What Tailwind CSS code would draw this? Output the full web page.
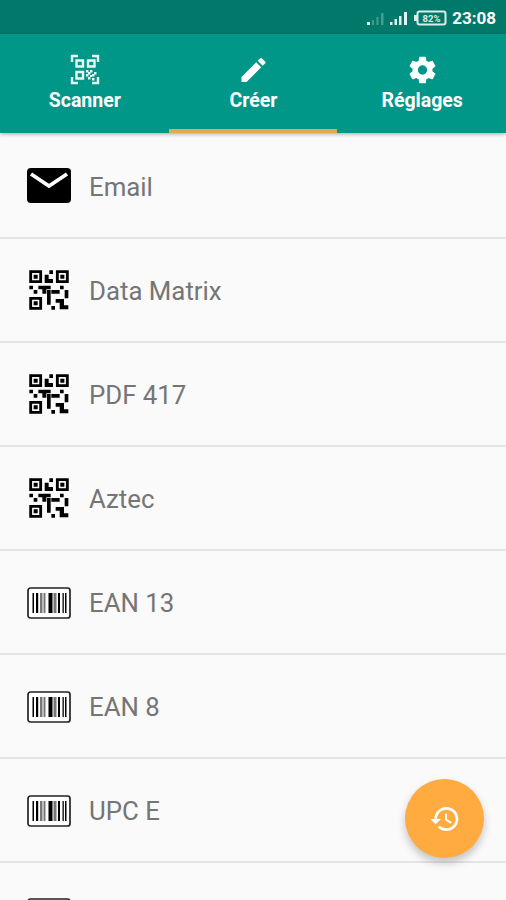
<!DOCTYPE html>
<html lang="fr"><head><meta charset="utf-8"><title>Créer</title><script src="https://cdn.jsdelivr.net/npm/@tailwindcss/browser@4"></script></head>
<body class="w-[506px] h-[900px] overflow-hidden bg-[#fafafa] font-[Roboto,sans-serif]">
<svg class="hidden">
<symbol id="qr" viewBox="0 0 120 120"><path fill="none" stroke="#000" stroke-width="8.500" d="M5 5H35V35H5ZM85 5H115V35H85ZM5 85H35V115H5Z"/><path d="M14 14h12v12H14zM94 14h12v12H94zM14 94h12v12H14zM61 1h11v11H61zM47 14h12v13h13v12H47zM1 47h11v11H1zM14 60h11v11H14zM28 47h37v11H52v13H40V58H28zM54 60h11v44H54zM67 60h25v11H67zM93 47h11v11H93zM107 60h11v25h-11zM80 87h25v19h13v12H92V98H80zM67 108h11v11H67z"/></symbol>
<symbol id="bar" viewBox="0 0 44 32"><rect x="1" y="1" width="42" height="30" rx="2.500" fill="#fff" stroke="#222" stroke-width="1.700"/><path d="M5.500 6H7v20H5.500zM9 6h2.200v20H9zM21.500 6h4v20h-4zM31 6h2v20h-2zM35.500 6h1.300v20h-1.300zM38 6h1.500v20H38z"/><path fill="#777" d="M13 6h2.500v20H13zM16.500 6h2v20h-2zM26.500 6h3v20h-3z"/></symbol>
</svg>
<div class="flex h-[900px] flex-col overflow-hidden">
<div class="flex h-[34px] shrink-0 items-center justify-end bg-[#00796b] pt-[1px] pr-[10px] text-white">
<svg class="mr-[4px] h-[16px] w-[44px]" viewBox="0 0 44 16"><g fill="#e4f3f0"><path d="M1 12h3v3H1zM24 12h2.500v3H24zM28.500 9H31v6h-2.500zM33 6h2.500v9H33zM38 2h3v13h-3z"/><path opacity=".3" d="M6 10h2v5H6zM10.500 7h2v8h-2zM15 3h2.500v12H15z"/></g></svg>
<svg class="mr-[5px] h-[16px] w-[33px]" viewBox="0 0 33 16"><rect x="3.500" y="1.500" width="28" height="13" rx="2" fill="none" stroke="#d9eeea" stroke-width="2"/><path fill="#d9eeea" d="M0 5h3v6H0z"/><text x="17.500" y="11.500" text-anchor="middle" font-family="Roboto" font-size="9.500" font-weight="700" fill="#d9eeea">82%</text></svg>
<span class="pt-[1px] text-[17px] font-bold leading-none">23:08</span></div>
<div class="relative z-10 grid h-[99px] shrink-0 grid-cols-3 bg-[#009688] text-[19.500px] font-bold leading-6 text-white shadow-[0_1px_4px_rgba(0,0,0,0.35)]">
<div class="flex flex-col items-center pt-[20px] pl-[1px]"><svg class="h-[31px] w-[30px]" viewBox="0 0 30 31"><g fill="none" stroke="#e9f7f5" stroke-width="2.400"><path d="M2 8V2h6M22 2h6v6M2 23v6h6M22 29h6v-6"/><path d="M6.500 6.500h6.500v6H6.500zM18 6.500h6.500v6H18zM6.500 18h6.500v6.500H6.500z"/></g><path fill="#e9f7f5" d="M16 16h2.500v2.500H16zM20 16h2.500v2.500H20zM24 18h2.500v2.500H24zM18 18h2.500v2.500H18zM22 20h2.500v2.500H22zM16 20h2.500v2.500H16zM20 21h2v2h-2zM18 23h2.500v2.500H18zM22 24h2.500v2.500H22z"/></svg><span class="pt-[4px]">Scanner</span></div>
<div class="flex flex-col items-center border-b-4 border-[#e5a94a] pt-[20px] pl-[1px]"><svg class="h-[32px] w-[35px]" viewBox="0 0 24 24" fill="#fff"><path d="M3 17.250V21h3.750L17.810 9.940l-3.750-3.750L3 17.250zM20.710 7.040a1 1 0 0 0 0-1.410l-2.340-2.340a1 1 0 0 0-1.410 0l-1.830 1.830 3.750 3.750 1.830-1.830z"/></svg><span class="pt-[3px]">Créer</span></div>
<div class="flex flex-col items-center pt-[20px] pl-[1px]"><svg class="h-[32px] w-[33px]" viewBox="0 0 24 24" fill="#fff"><path d="M19.430 12.980c.04-.32.07-.64.07-.98s-.03-.66-.07-.98l2.110-1.650c.19-.15.24-.42.12-.64l-2-3.460c-.12-.22-.39-.3-.61-.22l-2.490 1c-.52-.4-1.080-.73-1.690-.98l-.38-2.650A.488.488 0 0 0 14 2h-4c-.25 0-.46.18-.49.42l-.38 2.650c-.61.25-1.170.59-1.690.98l-2.490-1c-.23-.09-.49 0-.61.22l-2 3.460c-.13.22-.07.49.12.64l2.110 1.650c-.04.32-.07.65-.07.98s.03.66.07.98l-2.110 1.650c-.19.15-.24.42-.12.64l2 3.460c.12.22.39.3.61.22l2.490-1c.52.4 1.080.73 1.690.98l.38 2.650c.03.24.24.42.49.42h4c.25 0 .46-.18.49-.42l.38-2.650c.61-.25 1.170-.59 1.690-.98l2.490 1c.23.09.49 0 .61-.22l2-3.460c.12-.22.07-.49-.12-.64l-2.110-1.650zM12 15.500a3.500 3.500 0 1 1 0-7 3.500 3.500 0 0 1 0 7z"/></svg><span class="pt-[3px]">Réglages</span></div>
</div>
<main class="text-[25.800px] text-[#757575]">
<div class="flex h-[106px] items-center border-b-2 border-[#e4e4e4] pt-[1px] pl-[27px]"><svg class="mr-[18px] h-[35px] w-[44px]" viewBox="0 0 44 35"><rect width="44" height="35" rx="4"/><path d="M4 6L22 18 40 6" fill="none" stroke="#fff" stroke-width="3.800"/></svg><span class="pt-[3px]">Email</span></div>
<div class="flex h-[104px] items-center border-b-2 border-[#e4e4e4] pl-[29px]"><svg class="mr-[20px] size-[40px]"><use href="#qr"/></svg><span class="pt-[2px]">Data Matrix</span></div>
<div class="flex h-[104px] items-center border-b-2 border-[#e4e4e4] pl-[29px]"><svg class="mr-[20px] size-[40px]"><use href="#qr"/></svg><span class="pt-[2px]">PDF 417</span></div>
<div class="flex h-[104px] items-center border-b-2 border-[#e4e4e4] pl-[29px]"><svg class="mr-[20px] size-[40px]"><use href="#qr"/></svg><span class="pt-[2px]">Aztec</span></div>
<div class="flex h-[104px] items-center border-b-2 border-[#e4e4e4] pl-[27px]"><svg class="mt-[2px] mr-[18px] h-[32px] w-[44px]"><use href="#bar"/></svg><span class="pt-[2px]">EAN 13</span></div>
<div class="flex h-[104px] items-center border-b-2 border-[#e4e4e4] pl-[27px]"><svg class="mt-[2px] mr-[18px] h-[32px] w-[44px]"><use href="#bar"/></svg><span class="pt-[2px]">EAN 8</span></div>
<div class="flex h-[104px] items-center border-b-2 border-[#e4e4e4] pl-[27px]"><svg class="mt-[2px] mr-[18px] h-[32px] w-[44px]"><use href="#bar"/></svg><span class="pt-[2px]">UPC E</span></div>
<div class="flex h-[37px] items-start overflow-hidden pt-[35px] pl-[27px]"><svg class="h-[32px] w-[44px] shrink-0"><use href="#bar"/></svg></div>
</main></div>
<button class="absolute top-[779px] left-[405px] flex size-[79px] items-center justify-center rounded-full bg-[#ffab40] shadow-[0_5px_9px_rgba(0,0,0,0.22)]"><svg class="h-[32px] w-[32px]" viewBox="0 0 24 24" fill="#fff"><path d="M13 3a9 9 0 0 0-9 9H1l3.890 3.890.07.14L9 12H6c0-3.870 3.130-7 7-7s7 3.130 7 7-3.130 7-7 7c-1.930 0-3.680-.79-4.940-2.060l-1.420 1.420A8.954 8.954 0 0 0 13 21a9 9 0 0 0 0-18zm-1 5v5l4.280 2.540.72-1.210-3.500-2.080V8H12z"/></svg></button>
</body></html>
